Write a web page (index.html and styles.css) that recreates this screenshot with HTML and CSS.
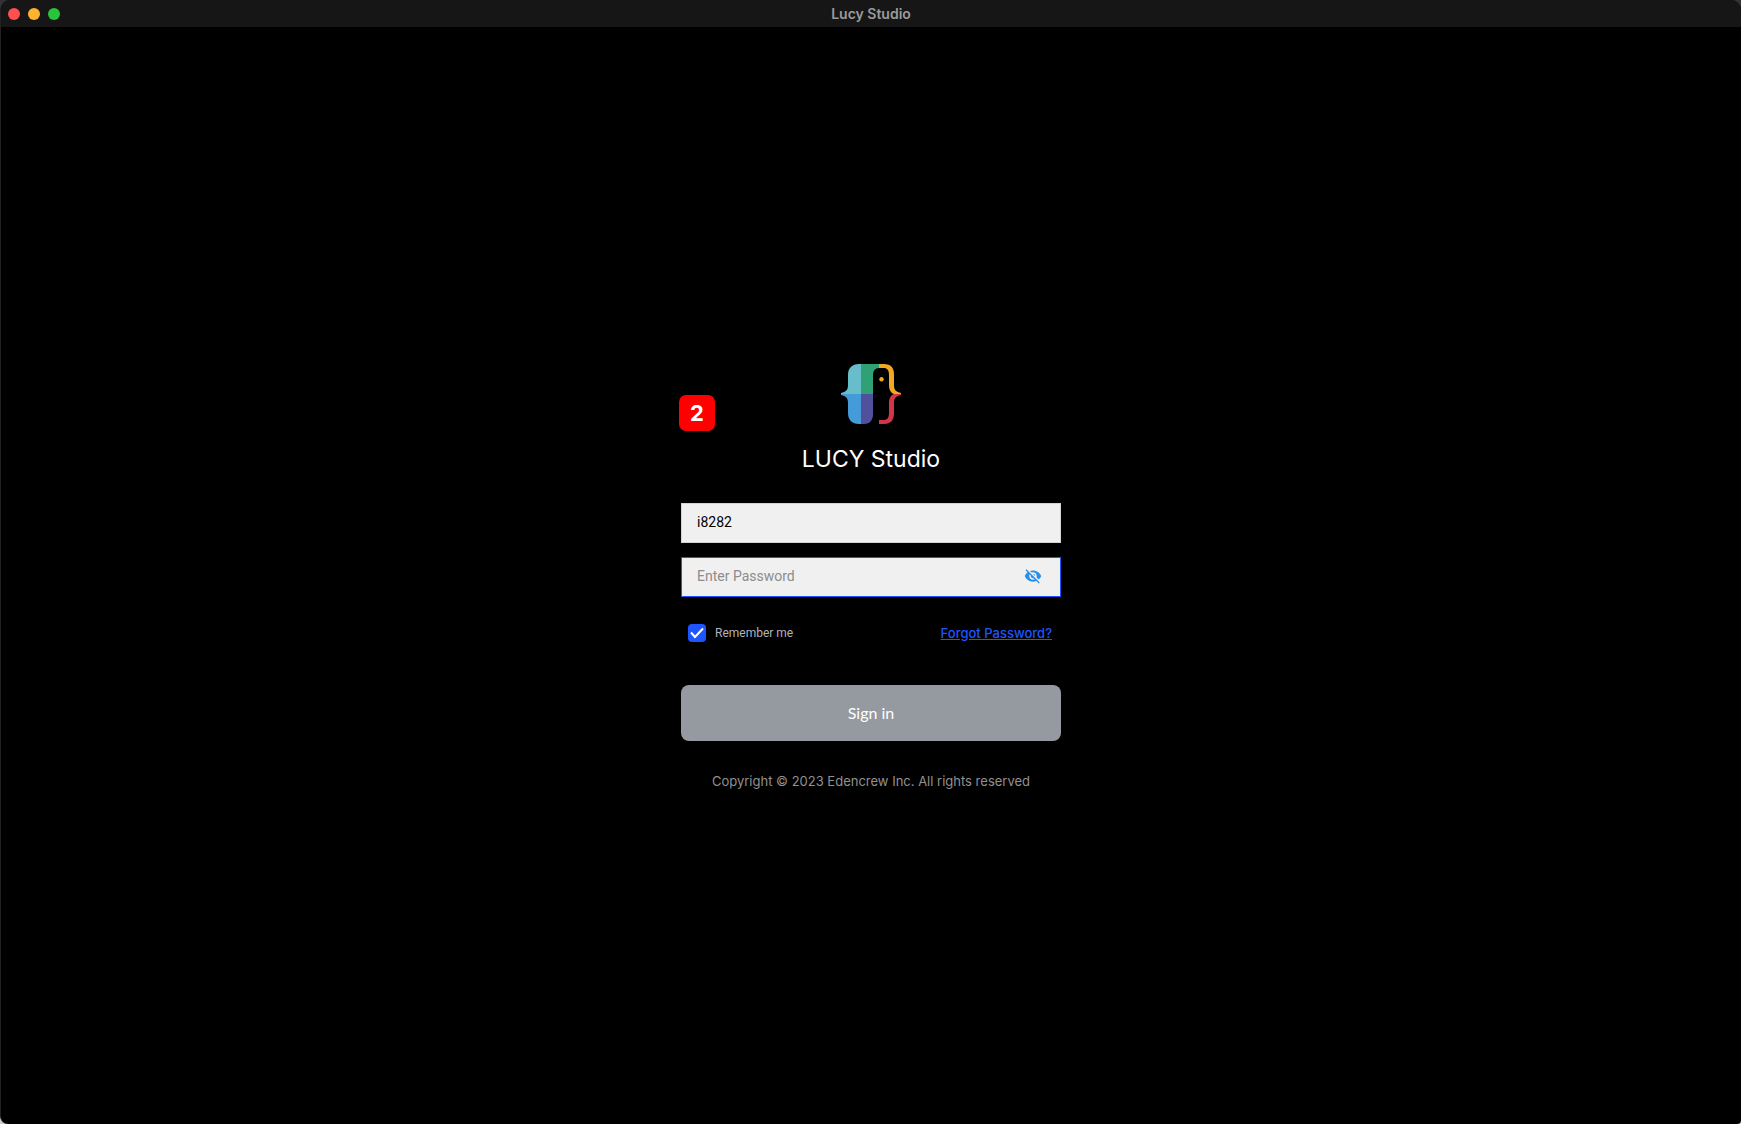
FILE: index.html
```html
<!DOCTYPE html>
<html lang="en">
<head>
<meta charset="utf-8">
<title>Lucy Studio</title>
<link rel="stylesheet" href="styles.css">
</head>
<body>
<div class="window">
  <header class="titlebar">
    <div class="lights">
      <button class="light light-close" type="button" aria-label="Close"></button>
      <button class="light light-minimize" type="button" aria-label="Minimize"></button>
      <button class="light light-zoom" type="button" aria-label="Zoom"></button>
    </div>
    <span class="titlebar-text">Lucy Studio</span>
  </header>
  <main class="content">
    <form class="login">
      <span class="step-badge">2</span>
      <svg class="logo" viewBox="0 0 60 60" aria-hidden="true">
        <path fill="#68bdcb" d="M20 0v30H0v-1c5-1 7-3 7-8V11C7 4 11 0 18 0z"/>
        <path fill="#459bd9" d="M0 30h20v30h-2C11 60 7 56 7 49V39c0-5-2-7-7-8z"/>
        <path fill="#30a175" d="M20 0h18v4c-4 0-6 3-6 7v19H20z"/>
        <path fill="#50509c" d="M20 30h12v20c0 6-3 10-9 10h-3z"/>
        <path fill="#f2a922" d="M38 0h5c7 0 10 4 10 10v11c0 5 2 7 7 8v1h-7c-3-1-5-4-5-9V11c0-5-2-7-5-7h-5z"/>
        <path fill="#d13548" d="M53 30h7v1c-5 1-7 3-7 8v10c0 7-3 11-10 11h-5v-4h5c3 0 5-2 5-7V39c0-5 2-8 5-9z"/>
        <circle cx="40.500" cy="15.300" r="2.200" fill="#f2a922"/>
      </svg>
      <h1 class="heading">LUCY Studio</h1>
      <div class="fields">
        <input class="field" type="text" value="i8282" aria-label="User ID">
        <div class="password">
          <input class="field field-active" type="password" placeholder="Enter Password" aria-label="Password">
          <button class="reveal" type="button" aria-label="Show password">
            <svg viewBox="0 0 24 24" aria-hidden="true"><path fill="#2490ee" d="M12 7c2.760 0 5 2.240 5 5 0 .65-.13 1.260-.36 1.830l2.920 2.920c1.510-1.260 2.700-2.890 3.430-4.750-1.730-4.390-6-7.500-11-7.500-1.400 0-2.740.25-3.980.7l2.160 2.160C10.740 7.130 11.350 7 12 7zM2 4.270l2.280 2.280.46.46C3.080 8.300 1.780 10.020 1 12c1.730 4.390 6 7.500 11 7.500 1.550 0 3.030-.3 4.380-.84l.42.42L19.730 22 21 20.730 3.270 3 2 4.270zM7.530 9.800l1.550 1.550c-.05.21-.08.43-.08.65 0 1.660 1.340 3 3 3 .22 0 .44-.03.65-.08l1.550 1.550c-.67.33-1.410.53-2.200.53-2.760 0-5-2.240-5-5 0-.79.2-1.530.53-2.200zm4.310-.78l3.150 3.150.02-.16c0-1.660-1.340-3-3-3l-.17.01z"/></svg>
          </button>
        </div>
      </div>
      <div class="options">
        <label class="remember"><input class="check" type="checkbox" checked>Remember me</label>
        <a class="forgot" href="#">Forgot Password?</a>
      </div>
      <button class="submit" type="submit">Sign in</button>
      <p class="copyright">Copyright © 2023 Edencrew Inc. All rights reserved</p>
    </form>
  </main>
</div>
</body>
</html>
```
FILE: styles.css
```css
* {
  box-sizing: border-box;
}

body {
  margin: 0;
  background: linear-gradient(#333 50%, #ccc 50%);
  font-family: Inter, "Liberation Sans", sans-serif;
}

button {
  padding: 0;
  border: 0;
}

.window {
  display: flex;
  flex-direction: column;
  min-height: 100vh;
  overflow: hidden;
  border-left: 1px solid #222;
  border-radius: 10px 10px 4px 8px;
  background: #000;
}

.titlebar {
  display: grid;
  grid-template-columns: 1fr auto 1fr;
  align-items: center;
  height: 27px;
  padding: 0 7px;
  background: #161616;
}

.lights {
  display: flex;
  gap: 8px;
}

.light {
  width: 12px;
  height: 12px;
  border-radius: 50%;
}

.light-close {
  background: #ff4f50;
}

.light-minimize {
  background: #fdb32f;
}

.light-zoom {
  background: #28c53b;
}

.titlebar-text {
  color: #9b9b9b;
  font-size: 14px;
  font-weight: 600;
  line-height: 20px;
}

.content {
  display: flex;
  flex: 1;
  align-items: center;
  justify-content: center;
  padding-top: 4px;
}

.login {
  position: relative;
  display: flex;
  flex-direction: column;
  align-items: center;
  width: 380px;
}

.step-badge {
  position: absolute;
  top: 31px;
  left: -2px;
  width: 36px;
  height: 36px;
  border-radius: 7px;
  background: #f00;
  color: #fff;
  font-size: 22px;
  font-weight: 700;
  line-height: 36px;
  text-align: center;
}

.logo {
  width: 60px;
  height: 60px;
}

.heading {
  margin: 19px 0 28px;
  color: #fff;
  font-size: 23px;
  font-weight: 400;
  line-height: 32px;
}

.fields {
  display: flex;
  flex-direction: column;
  gap: 14px;
  width: 100%;
}

.field {
  display: block;
  width: 100%;
  height: 40px;
  padding: 0 15px 2px;
  border: 1px solid #d0d4d4;
  border-radius: 0;
  outline: none;
  background: #f0f0f0;
  color: #000;
  font: 14px Roboto, "Liberation Sans", sans-serif;
}

.field::placeholder {
  color: #8c8c8c;
}

.field-active {
  border-color: #1f55ff;
}

.password {
  position: relative;
}

.reveal {
  position: absolute;
  top: 9px;
  right: 18px;
  width: 20px;
  height: 20px;
  background: none;
}

.reveal svg {
  display: block;
  width: 18px;
  height: 18px;
  margin: auto;
}

.options {
  display: flex;
  align-items: center;
  justify-content: space-between;
  width: 100%;
  height: 18px;
  margin: 27px 0 43px;
  padding: 0 9px 0 7px;
}

.remember {
  display: flex;
  align-items: center;
  gap: 9px;
  color: #b0b4bb;
  font-family: Roboto, "Liberation Sans", sans-serif;
  font-size: 12px;
  line-height: 18px;
}

.check {
  width: 18px;
  height: 18px;
  margin: 0;
  border-radius: 4px;
  appearance: none;
  background: #1f55ff url("data:image/svg+xml,%3Csvg xmlns='http://www.w3.org/2000/svg' viewBox='0 0 18 18'%3E%3Cpath d='M3 8.500l4 4.500 8-8.500' fill='none' stroke='white' stroke-width='2'/%3E%3C/svg%3E");
}

.forgot {
  color: #1f55ff;
  font-size: 13px;
  font-weight: 500;
  line-height: 18px;
}

.submit {
  width: 100%;
  height: 56px;
  padding-bottom: 2px;
  border-radius: 8px;
  background: #9599a0;
  color: #fff;
  font: 16px Lato, sans-serif;
}

.copyright {
  margin: 30px 0 0;
  color: #919191;
  font-size: 13px;
  line-height: 20px;
}
```
